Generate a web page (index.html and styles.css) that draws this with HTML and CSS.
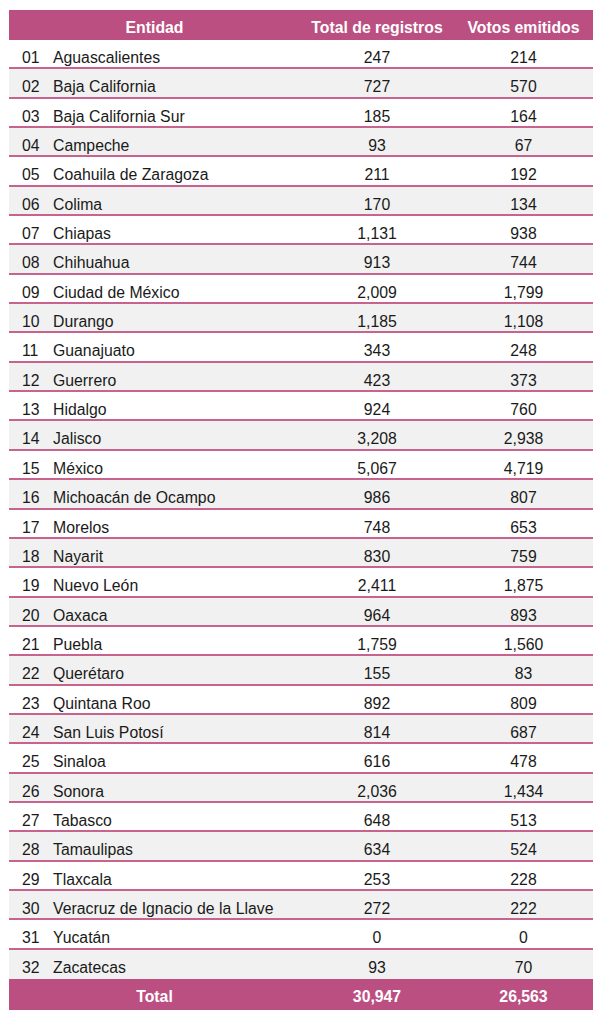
FILE: index.html
```html
<!DOCTYPE html>
<html lang="es">
<head>
<meta charset="utf-8">
<link rel="stylesheet" href="styles.css">
</head>
<body>
<table class="tabla">
  <colgroup>
    <col class="c-num"><col class="c-name"><col class="c-total"><col class="c-votos">
  </colgroup>
  <thead>
    <tr class="head"><th colspan="2">Entidad</th><th>Total de registros</th><th>Votos emitidos</th></tr>
  </thead>
  <tbody>
    <tr><td class="num">01</td><td class="name">Aguascalientes</td><td>247</td><td>214</td></tr>
    <tr><td class="num">02</td><td class="name">Baja California</td><td>727</td><td>570</td></tr>
    <tr><td class="num">03</td><td class="name">Baja California Sur</td><td>185</td><td>164</td></tr>
    <tr><td class="num">04</td><td class="name">Campeche</td><td>93</td><td>67</td></tr>
    <tr><td class="num">05</td><td class="name">Coahuila de Zaragoza</td><td>211</td><td>192</td></tr>
    <tr><td class="num">06</td><td class="name">Colima</td><td>170</td><td>134</td></tr>
    <tr><td class="num">07</td><td class="name">Chiapas</td><td>1,131</td><td>938</td></tr>
    <tr><td class="num">08</td><td class="name">Chihuahua</td><td>913</td><td>744</td></tr>
    <tr><td class="num">09</td><td class="name">Ciudad de México</td><td>2,009</td><td>1,799</td></tr>
    <tr><td class="num">10</td><td class="name">Durango</td><td>1,185</td><td>1,108</td></tr>
    <tr><td class="num">11</td><td class="name">Guanajuato</td><td>343</td><td>248</td></tr>
    <tr><td class="num">12</td><td class="name">Guerrero</td><td>423</td><td>373</td></tr>
    <tr><td class="num">13</td><td class="name">Hidalgo</td><td>924</td><td>760</td></tr>
    <tr><td class="num">14</td><td class="name">Jalisco</td><td>3,208</td><td>2,938</td></tr>
    <tr><td class="num">15</td><td class="name">México</td><td>5,067</td><td>4,719</td></tr>
    <tr><td class="num">16</td><td class="name">Michoacán de Ocampo</td><td>986</td><td>807</td></tr>
    <tr><td class="num">17</td><td class="name">Morelos</td><td>748</td><td>653</td></tr>
    <tr><td class="num">18</td><td class="name">Nayarit</td><td>830</td><td>759</td></tr>
    <tr><td class="num">19</td><td class="name">Nuevo León</td><td>2,411</td><td>1,875</td></tr>
    <tr><td class="num">20</td><td class="name">Oaxaca</td><td>964</td><td>893</td></tr>
    <tr><td class="num">21</td><td class="name">Puebla</td><td>1,759</td><td>1,560</td></tr>
    <tr><td class="num">22</td><td class="name">Querétaro</td><td>155</td><td>83</td></tr>
    <tr><td class="num">23</td><td class="name">Quintana Roo</td><td>892</td><td>809</td></tr>
    <tr><td class="num">24</td><td class="name">San Luis Potosí</td><td>814</td><td>687</td></tr>
    <tr><td class="num">25</td><td class="name">Sinaloa</td><td>616</td><td>478</td></tr>
    <tr><td class="num">26</td><td class="name">Sonora</td><td>2,036</td><td>1,434</td></tr>
    <tr><td class="num">27</td><td class="name">Tabasco</td><td>648</td><td>513</td></tr>
    <tr><td class="num">28</td><td class="name">Tamaulipas</td><td>634</td><td>524</td></tr>
    <tr><td class="num">29</td><td class="name">Tlaxcala</td><td>253</td><td>228</td></tr>
    <tr><td class="num">30</td><td class="name">Veracruz de Ignacio de la Llave</td><td>272</td><td>222</td></tr>
    <tr><td class="num">31</td><td class="name">Yucatán</td><td>0</td><td>0</td></tr>
    <tr class="last"><td class="num">32</td><td class="name">Zacatecas</td><td>93</td><td>70</td></tr>
  </tbody>
  <tfoot>
    <tr class="foot"><td colspan="2">Total</td><td>30,947</td><td>26,563</td></tr>
  </tfoot>
</table>
</body>
</html>
```

FILE: styles.css
```css
html, body {
  margin: 0;
  padding: 0;
  background: #ffffff;
}
body {
  padding: 10px 0 0 9px;
  font-family: "Liberation Sans", Arial, sans-serif;
  font-size: 15.8px;
  color: #1a1a1a;
}
.tabla {
  width: 584px;
  border-collapse: collapse;
  table-layout: fixed;
}
.c-num { width: 36px; }
.c-name { width: 255px; }
.c-total { width: 154px; }
.c-votos { width: 139px; }

.tabla th,
.tabla td {
  padding: 9px 0 0 0;
  vertical-align: top;
  text-align: center;
  white-space: nowrap;
  line-height: 18px;
}
.head th {
  background: #bc4f82;
  color: #ffffff;
  font-weight: bold;
  height: 21px;
}
.tabla tbody td {
  height: 18.35px;
  border-bottom: 2px solid #c8628f;
}
.tabla tbody tr:nth-child(even) td {
  background: #f1f1f1;
}
.tabla tbody tr.last td {
  border-bottom: none;
  height: 20.35px;
}
.tabla td.num {
  text-align: left;
  padding-left: 13px;
}
.tabla td.name {
  text-align: left;
  padding-left: 8px;
}
.foot td {
  background: #bc4f82;
  color: #ffffff;
  font-weight: bold;
  height: 22px;
}
```
